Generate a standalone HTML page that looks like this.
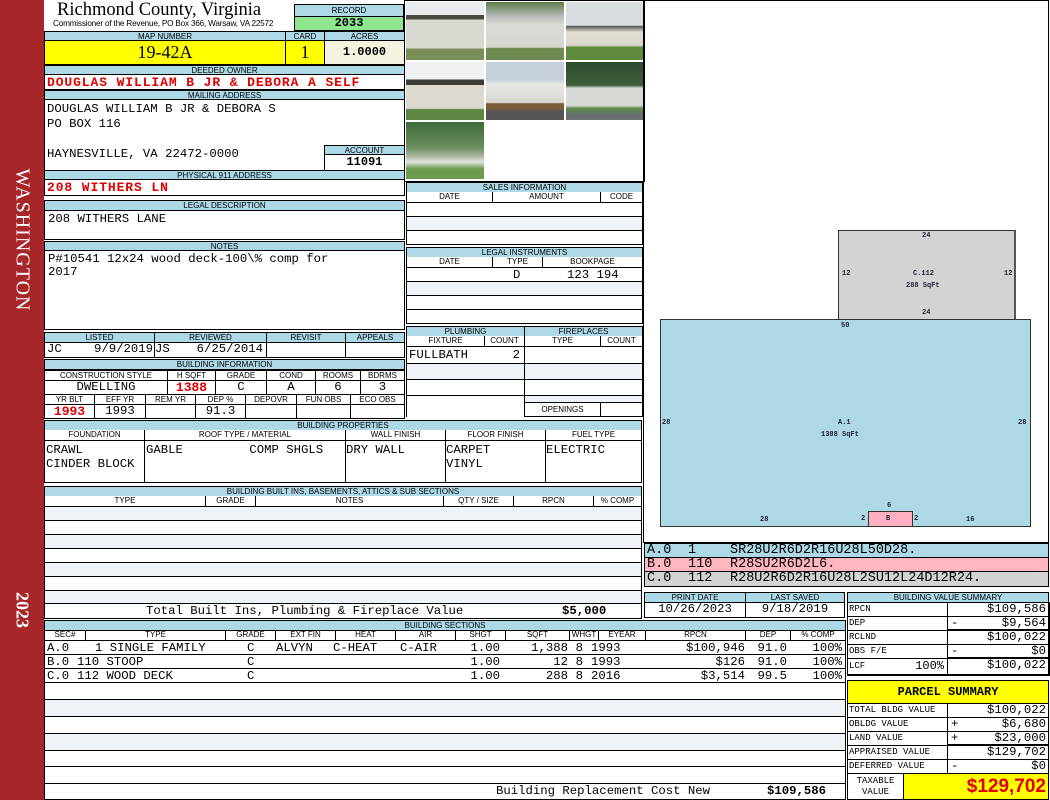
<!DOCTYPE html>
<html><head><meta charset="utf-8"><style>
*{margin:0;padding:0;box-sizing:border-box}
body{width:1050px;height:800px;position:relative;background:#fff;overflow:hidden;font-family:"Liberation Mono",monospace;font-size:12px;color:#000}
div{position:absolute}
span{position:absolute}
.h{background:#add8e6;border:1px solid #000;font:8px/9px "Liberation Sans",sans-serif;text-align:center;white-space:nowrap;overflow:hidden}
.c{border:1px solid #000;white-space:nowrap;overflow:hidden}
.hs{font:8px/9px "Liberation Sans",sans-serif;text-align:center;border:1px solid #000;border-top:none;background:#fff;white-space:nowrap;overflow:hidden}
.m{font-family:"Liberation Mono",monospace;font-size:12.3px;line-height:13px;white-space:pre}
.red{color:#e00000;font-weight:bold;font-size:13px;letter-spacing:0.9px}
.ph{border:1px solid #fff}
.sk{font:7px "Liberation Mono",monospace;color:#223;font-weight:bold}
.st{background:#eef3f8}
.r{text-align:right}
</style></head><body>
<!-- red bar -->
<div style="left:0;top:0;width:44px;height:800px;background:#a6262a"></div>
<div style="left:22px;top:240px;transform:translate(-50%,-50%) rotate(90deg);color:#fff;font:20px 'Liberation Serif',serif;white-space:nowrap;letter-spacing:1px">WASHINGTON</div>
<div style="left:22px;top:610px;transform:translate(-50%,-50%) rotate(90deg);color:#fff;font:bold 18px 'Liberation Serif',serif">2023</div>

<!-- title -->
<div style="left:57px;top:0px;font:18.5px/20px 'Liberation Serif',serif;white-space:nowrap">Richmond County, Virginia</div>
<div style="left:53px;top:19px;font:8.2px 'Liberation Sans',sans-serif;white-space:nowrap;letter-spacing:-0.2px">Commissioner of the Revenue, PO Box 366, Warsaw, VA 22572</div>
<div class="h" style="left:294px;top:4px;width:110px;height:13px;line-height:11px">RECORD</div>
<div class="c" style="left:294px;top:16px;width:110px;height:15px;background:#8fe68f;text-align:center;font:bold 12px/13px 'Liberation Mono',monospace">2033</div>

<div class="h" style="left:44px;top:31px;width:242px;height:10px">MAP NUMBER</div>
<div class="h" style="left:285px;top:31px;width:40px;height:10px">CARD</div>
<div class="h" style="left:324px;top:31px;width:81px;height:10px">ACRES</div>
<div class="c" style="left:44px;top:40px;width:242px;height:25px;background:#ffff00;text-align:center;font:18px/23px 'Liberation Serif',serif">19-42A</div>
<div class="c" style="left:285px;top:40px;width:40px;height:25px;background:#ffff00;text-align:center;font:18px/23px 'Liberation Serif',serif">1</div>
<div class="c" style="left:324px;top:40px;width:81px;height:25px;background:#f5f3e0;text-align:center;font:bold 12px/23px 'Liberation Mono',monospace">1.0000</div>

<div class="h" style="left:44px;top:65px;width:361px;height:10px">DEEDED OWNER</div>
<div class="c m red" style="left:44px;top:74px;width:361px;height:16px;line-height:15px;padding-left:2px">DOUGLAS WILLIAM B JR &amp; DEBORA A SELF</div>
<div class="h" style="left:44px;top:90px;width:361px;height:10px">MAILING ADDRESS</div>
<div class="c" style="left:44px;top:99px;width:361px;height:72px"></div>
<div class="m" style="left:47px;top:102px;line-height:15px">DOUGLAS WILLIAM B JR &amp; DEBORA S
PO BOX 116

HAYNESVILLE, VA 22472-0000</div>
<div class="h" style="left:324px;top:145px;width:81px;height:10px">ACCOUNT</div>
<div class="c" style="left:324px;top:154px;width:81px;height:17px;text-align:center;font:bold 12px/15px 'Liberation Mono',monospace">11091</div>
<div class="h" style="left:44px;top:170px;width:361px;height:10px">PHYSICAL 911 ADDRESS</div>
<div class="c m red" style="left:44px;top:179px;width:361px;height:17px;line-height:15px;padding-left:2px">208 WITHERS LN</div>

<div class="h" style="left:44px;top:200px;width:361px;height:11px">LEGAL DESCRIPTION</div>
<div class="c m" style="left:44px;top:210px;width:361px;height:30px;padding:2px 3px">208 WITHERS LANE</div>
<div class="h" style="left:44px;top:241px;width:361px;height:10px">NOTES</div>
<div class="c m" style="left:44px;top:250px;width:361px;height:80px;padding:2px 3px">P#10541 12x24 wood deck-100\% comp for
2017</div>

<!-- listed -->
<div class="h" style="left:44px;top:332px;width:111px;height:11px">LISTED</div>
<div class="h" style="left:154px;top:332px;width:113px;height:11px">REVIEWED</div>
<div class="h" style="left:266px;top:332px;width:80px;height:11px">REVISIT</div>
<div class="h" style="left:345px;top:332px;width:60px;height:11px">APPEALS</div>
<div class="c m" style="left:44px;top:342px;width:111px;height:16px"><span style="left:2px">JC</span><span style="right:1px">9/9/2019</span></div>
<div class="c m" style="left:154px;top:342px;width:113px;height:16px"><span style="left:0">JS</span><span style="right:3px">6/25/2014</span></div>
<div class="c" style="left:266px;top:342px;width:80px;height:16px"></div>
<div class="c" style="left:345px;top:342px;width:60px;height:16px"></div>

<div class="h" style="left:44px;top:359px;width:361px;height:11px">BUILDING INFORMATION</div>
<div class="hs" style="left:44px;top:370px;width:124px;height:11px;border-top:1px solid #000">CONSTRUCTION STYLE</div>
<div class="hs" style="left:167px;top:370px;width:49px;height:11px;border-top:1px solid #000">H SQFT</div>
<div class="hs" style="left:215px;top:370px;width:52px;height:11px;border-top:1px solid #000">GRADE</div>
<div class="hs" style="left:266px;top:370px;width:50px;height:11px;border-top:1px solid #000">COND</div>
<div class="hs" style="left:315px;top:370px;width:46px;height:11px;border-top:1px solid #000">ROOMS</div>
<div class="hs" style="left:360px;top:370px;width:45px;height:11px;border-top:1px solid #000">BDRMS</div>
<div class="c m" style="left:44px;top:380px;width:124px;height:15px;text-align:center">DWELLING</div>
<div class="c m red" style="left:167px;top:380px;width:49px;height:15px;text-align:center;letter-spacing:0">1388</div>
<div class="c m" style="left:215px;top:380px;width:52px;height:15px;text-align:center">C</div>
<div class="c m" style="left:266px;top:380px;width:50px;height:15px;text-align:center">A</div>
<div class="c m" style="left:315px;top:380px;width:46px;height:15px;text-align:center">6</div>
<div class="c m" style="left:360px;top:380px;width:45px;height:15px;text-align:center">3</div>
<div class="hs" style="left:44px;top:394px;width:51px;height:11px;border-top:1px solid #000">YR BLT</div>
<div class="hs" style="left:94px;top:394px;width:52px;height:11px;border-top:1px solid #000">EFF YR</div>
<div class="hs" style="left:145px;top:394px;width:51px;height:11px;border-top:1px solid #000">REM YR</div>
<div class="hs" style="left:195px;top:394px;width:51px;height:11px;border-top:1px solid #000">DEP %</div>
<div class="hs" style="left:245px;top:394px;width:52px;height:11px;border-top:1px solid #000">DEPOVR</div>
<div class="hs" style="left:296px;top:394px;width:55px;height:11px;border-top:1px solid #000">FUN OBS</div>
<div class="hs" style="left:350px;top:394px;width:55px;height:11px;border-top:1px solid #000">ECO OBS</div>
<div class="c m red" style="left:44px;top:404px;width:51px;height:15px;text-align:center;letter-spacing:0">1993</div>
<div class="c m" style="left:94px;top:404px;width:52px;height:15px;text-align:center">1993</div>
<div class="c" style="left:145px;top:404px;width:51px;height:15px"></div>
<div class="c m" style="left:195px;top:404px;width:51px;height:15px;text-align:center">91.3</div>
<div class="c" style="left:245px;top:404px;width:52px;height:15px"></div>
<div class="c" style="left:296px;top:404px;width:55px;height:15px"></div>
<div class="c" style="left:350px;top:404px;width:55px;height:15px"></div>

<!-- photos -->
<div style="left:404px;top:0;width:241px;height:182px;border:1px solid #000"></div>
<div class="ph" style="left:405px;top:1px;width:80px;height:60px;background:linear-gradient(#e8ecef 0,#e8ecef 22%,#4a4a44 22%,#4a4a44 30%,#d9d8d0 30%,#d9d8d0 80%,#7a8f58 80%)"></div>
<div class="ph" style="left:485px;top:1px;width:80px;height:60px;background:linear-gradient(#5d7a48 0,#b9bcbc 25%,#dcdcd6 40%,#d6d6d0 78%,#6f8b4f 80%)"></div>
<div class="ph" style="left:565px;top:1px;width:79px;height:60px;background:linear-gradient(#d8dde0 0,#d8dde0 40%,#5a5a55 42%,#e2ded4 52%,#d8d4c8 75%,#5f8a3e 78%)"></div>
<div class="ph" style="left:405px;top:61px;width:80px;height:60px;background:linear-gradient(#eef0f2 0,#eef0f2 30%,#3c3c38 30%,#3c3c38 40%,#dcd9d0 40%,#dcd9d0 80%,#5f8640 82%)"></div>
<div class="ph" style="left:485px;top:61px;width:80px;height:60px;background:linear-gradient(#c6d0dc 0,#c6d0dc 30%,#e8e8e6 38%,#d9d6d0 70%,#7a5c3a 72%,#7a5c3a 80%,#555 85%)"></div>
<div class="ph" style="left:565px;top:61px;width:79px;height:60px;background:linear-gradient(#2c4a2e 0,#3d5d3a 40%,#d6d9d4 45%,#d6d9d4 75%,#5c8a48 80%,#6a7070 92%)"></div>
<div class="ph" style="left:405px;top:121px;width:80px;height:59px;background:linear-gradient(#3e6a3a 0,#6a8e5e 45%,#aab7a0 60%,#e0e4e0 70%,#6e9a4e 82%)"></div>

<!-- sales -->
<div class="h" style="left:406px;top:182px;width:237px;height:11px">SALES INFORMATION</div>
<div class="hs" style="left:406px;top:192px;width:87px;height:11px">DATE</div>
<div class="hs" style="left:492px;top:192px;width:109px;height:11px">AMOUNT</div>
<div class="hs" style="left:600px;top:192px;width:43px;height:11px">CODE</div>
<div class="c" style="left:406px;top:202px;width:237px;height:15px"></div>
<div class="c st" style="left:406px;top:216px;width:237px;height:15px"></div>
<div class="c" style="left:406px;top:230px;width:237px;height:15px"></div>
<div class="h" style="left:406px;top:247px;width:237px;height:11px">LEGAL INSTRUMENTS</div>
<div class="hs" style="left:406px;top:257px;width:87px;height:11px">DATE</div>
<div class="hs" style="left:492px;top:257px;width:51px;height:11px">TYPE</div>
<div class="hs" style="left:542px;top:257px;width:101px;height:11px">BOOKPAGE</div>
<div class="c m" style="left:406px;top:267px;width:237px;height:15px"><span style="left:106px;top:1px">D</span><span style="left:160px;top:1px">123 194</span></div>
<div class="c st" style="left:406px;top:281px;width:237px;height:15px"></div>
<div class="c" style="left:406px;top:295px;width:237px;height:15px"></div>
<div class="c" style="left:406px;top:309px;width:237px;height:15px"></div>

<!-- plumbing -->
<div class="h" style="left:406px;top:326px;width:119px;height:11px">PLUMBING</div>
<div class="h" style="left:524px;top:326px;width:119px;height:11px">FIREPLACES</div>
<div class="hs" style="left:406px;top:336px;width:79px;height:11px">FIXTURE</div>
<div class="hs" style="left:484px;top:336px;width:41px;height:11px">COUNT</div>
<div class="hs" style="left:524px;top:336px;width:77px;height:11px">TYPE</div>
<div class="hs" style="left:600px;top:336px;width:43px;height:11px">COUNT</div>
<div class="c m" style="left:406px;top:346px;width:119px;height:18px"><span style="left:2px;top:2px">FULLBATH</span><span style="right:4px;top:2px">2</span></div>
<div class="c st" style="left:406px;top:363px;width:119px;height:17px"></div>
<div class="c" style="left:406px;top:379px;width:119px;height:17px"></div>
<div class="c st" style="left:406px;top:395px;width:119px;height:22px;border-bottom:none;background:#fff"></div>
<div class="c" style="left:524px;top:346px;width:119px;height:18px"></div>
<div class="c st" style="left:524px;top:363px;width:119px;height:17px"></div>
<div class="c" style="left:524px;top:379px;width:119px;height:17px"></div>
<div class="c st" style="left:524px;top:395px;width:119px;height:8px"></div>
<div class="c" style="left:524px;top:402px;width:77px;height:15px;font:8px/13px 'Liberation Sans',sans-serif;text-align:center">OPENINGS</div>
<div class="c" style="left:600px;top:402px;width:43px;height:15px"></div>

<!-- building properties -->
<div class="h" style="left:44px;top:420px;width:598px;height:11px">BUILDING PROPERTIES</div>
<div class="hs" style="left:44px;top:430px;width:101px;height:11px">FOUNDATION</div>
<div class="hs" style="left:144px;top:430px;width:202px;height:11px">ROOF TYPE / MATERIAL</div>
<div class="hs" style="left:345px;top:430px;width:101px;height:11px">WALL FINISH</div>
<div class="hs" style="left:445px;top:430px;width:101px;height:11px">FLOOR FINISH</div>
<div class="hs" style="left:545px;top:430px;width:97px;height:11px">FUEL TYPE</div>
<div class="c m" style="left:44px;top:440px;width:101px;height:43px;padding:2px 1px;line-height:14px">CRAWL
CINDER BLOCK</div>
<div class="c m" style="left:144px;top:440px;width:202px;height:43px;padding:2px 1px;line-height:14px">GABLE         COMP SHGLS</div>
<div class="c m" style="left:345px;top:440px;width:101px;height:43px;padding:2px 0;line-height:14px">DRY WALL</div>
<div class="c m" style="left:445px;top:440px;width:101px;height:43px;padding:2px 0;line-height:14px">CARPET
VINYL</div>
<div class="c m" style="left:545px;top:440px;width:97px;height:43px;padding:2px 0;line-height:14px">ELECTRIC</div>

<!-- built ins -->
<div class="h" style="left:44px;top:486px;width:598px;height:11px">BUILDING BUILT INS, BASEMENTS, ATTICS &amp; SUB SECTIONS</div>
<div class="hs" style="left:44px;top:496px;width:162px;height:11px">TYPE</div>
<div class="hs" style="left:205px;top:496px;width:51px;height:11px">GRADE</div>
<div class="hs" style="left:255px;top:496px;width:189px;height:11px">NOTES</div>
<div class="hs" style="left:443px;top:496px;width:71px;height:11px">QTY / SIZE</div>
<div class="hs" style="left:513px;top:496px;width:81px;height:11px">RPCN</div>
<div class="hs" style="left:593px;top:496px;width:49px;height:11px">% COMP</div>
<div class="c st" style="left:44px;top:506px;width:598px;height:15px"></div>
<div class="c" style="left:44px;top:520px;width:598px;height:15px"></div>
<div class="c st" style="left:44px;top:534px;width:598px;height:15px"></div>
<div class="c" style="left:44px;top:548px;width:598px;height:15px"></div>
<div class="c st" style="left:44px;top:562px;width:598px;height:15px"></div>
<div class="c" style="left:44px;top:576px;width:598px;height:15px"></div>
<div class="c st" style="left:44px;top:590px;width:598px;height:14px"></div>
<div class="c m" style="left:44px;top:603px;width:598px;height:16px;line-height:15px"><span style="left:101px">Total Built Ins, Plumbing &amp; Fireplace Value</span><span style="left:517px;font-weight:bold">$5,000</span></div>

<!-- building sections -->
<div class="h" style="left:44px;top:620px;width:802px;height:11px">BUILDING SECTIONS</div>
<div style="left:44px;top:630px;width:802px;height:11px;border:1px solid #000;border-top:none;font:8px/10px 'Liberation Sans',sans-serif">
<span style="left:0;width:41px;text-align:center;border-right:1px solid #000">SEC#</span>
<span style="left:41px;width:140px;text-align:center;border-right:1px solid #000">TYPE</span>
<span style="left:181px;width:50px;text-align:center;border-right:1px solid #000">GRADE</span>
<span style="left:231px;width:60px;text-align:center;border-right:1px solid #000">EXT FIN</span>
<span style="left:291px;width:60px;text-align:center;border-right:1px solid #000">HEAT</span>
<span style="left:351px;width:60px;text-align:center;border-right:1px solid #000">AIR</span>
<span style="left:411px;width:50px;text-align:center;border-right:1px solid #000">SHGT</span>
<span style="left:461px;width:64px;text-align:center;border-right:1px solid #000">SQFT</span>
<span style="left:525px;width:29px;text-align:center;border-right:1px solid #000">WHGT</span>
<span style="left:554px;width:47px;text-align:center;border-right:1px solid #000">EYEAR</span>
<span style="left:601px;width:100px;text-align:center;border-right:1px solid #000">RPCN</span>
<span style="left:701px;width:45px;text-align:center;border-right:1px solid #000">DEP</span>
<span style="left:746px;width:54px;text-align:center">% COMP</span>
</div>
<div class="c m" style="left:44px;top:640px;width:802px;height:15px;line-height:14px"><span style="left:2px">A.0</span><span style="left:50px">1 SINGLE FAMILY</span><span style="left:202px">C</span><span style="left:231px">ALVYN</span><span style="left:288px">C-HEAT</span><span style="left:355px">C-AIR</span><span style="right:345px">1.00</span><span style="right:277px">1,388</span><span style="right:262px">8</span><span style="left:546px">1993</span><span style="right:100px">$100,946</span><span style="right:58px">91.0</span><span style="right:3px">100%</span></div>
<div class="c m" style="left:44px;top:654px;width:802px;height:15px;line-height:14px"><span style="left:2px">B.0</span><span style="left:32px">110 STOOP</span><span style="left:202px">C</span><span style="right:345px">1.00</span><span style="right:277px">12</span><span style="right:262px">8</span><span style="left:546px">1993</span><span style="right:100px">$126</span><span style="right:58px">91.0</span><span style="right:3px">100%</span></div>
<div class="c m" style="left:44px;top:668px;width:802px;height:15px;line-height:14px"><span style="left:2px">C.0</span><span style="left:32px">112 WOOD DECK</span><span style="left:202px">C</span><span style="right:345px">1.00</span><span style="right:277px">288</span><span style="right:262px">8</span><span style="left:546px">2016</span><span style="right:100px">$3,514</span><span style="right:58px">99.5</span><span style="right:3px">100%</span></div>
<div class="c" style="left:44px;top:682px;width:802px;height:18px"></div>
<div class="c st" style="left:44px;top:699px;width:802px;height:18px"></div>
<div class="c" style="left:44px;top:716px;width:802px;height:18px"></div>
<div class="c st" style="left:44px;top:733px;width:802px;height:18px"></div>
<div class="c" style="left:44px;top:750px;width:802px;height:17px"></div>
<div class="c" style="left:44px;top:766px;width:802px;height:18px"></div>
<div class="c m" style="left:44px;top:783px;width:802px;height:17px;line-height:15px"><span style="left:451px">Building Replacement Cost New</span><span style="left:722px;font-weight:bold">$109,586</span></div>

<!-- sketch -->
<div style="left:643px;top:0;width:406px;height:543px;border:1px solid #000"></div>
<div style="left:838px;top:230px;width:178px;height:90px;background:#d3d3d3;border:1px solid #333;border-right:2px solid #555"></div>
<div style="left:660px;top:319px;width:371px;height:208px;background:#add8e6;border:1px solid #333"></div>
<div style="left:868px;top:511px;width:45px;height:16px;background:#ffb0c0;border:1px solid #333"></div>
<div class="sk" style="left:922px;top:232px">24</div>
<div class="sk" style="left:842px;top:270px">12</div>
<div class="sk" style="left:1004px;top:270px">12</div>
<div class="sk" style="left:913px;top:270px">C.112</div>
<div class="sk" style="left:906px;top:282px">288 SqFt</div>
<div class="sk" style="left:922px;top:309px">24</div>
<div class="sk" style="left:841px;top:322px">50</div>
<div class="sk" style="left:662px;top:419px">28</div>
<div class="sk" style="left:1018px;top:419px">28</div>
<div class="sk" style="left:838px;top:419px">A.1</div>
<div class="sk" style="left:821px;top:431px">1388 SqFt</div>
<div class="sk" style="left:887px;top:502px">6</div>
<div class="sk" style="left:760px;top:516px">28</div>
<div class="sk" style="left:861px;top:515px">2</div>
<div class="sk" style="left:914px;top:515px">2</div>
<div class="sk" style="left:966px;top:516px">16</div>
<div class="sk" style="left:886px;top:515px">B</div>

<div class="m" style="left:644px;top:543px;width:405px;height:15px;background:#add8e6;border:1px solid #000;line-height:13px;font-size:13.5px"><span style="left:2px">A.0</span><span style="left:43px">1</span><span style="left:85px">SR28U2R6D2R16U28L50D28.</span></div>
<div class="m" style="left:644px;top:557px;width:405px;height:15px;background:#ffb6c1;border:1px solid #000;line-height:13px;font-size:13.5px"><span style="left:2px">B.0</span><span style="left:43px">110</span><span style="left:85px">R28SU2R6D2L6.</span></div>
<div class="m" style="left:644px;top:571px;width:405px;height:16px;background:#d3d3d3;border:1px solid #000;line-height:13px;font-size:13.5px"><span style="left:2px">C.0</span><span style="left:43px">112</span><span style="left:85px">R28U2R6D2R16U28L2SU12L24D12R24.</span></div>

<!-- print date -->
<div class="h" style="left:644px;top:592px;width:102px;height:11px">PRINT DATE</div>
<div class="h" style="left:745px;top:592px;width:100px;height:11px">LAST SAVED</div>
<div class="c m" style="left:644px;top:602px;width:102px;height:16px;text-align:center">10/26/2023</div>
<div class="c m" style="left:745px;top:602px;width:100px;height:16px;text-align:center">9/18/2019</div>

<!-- building value summary -->
<div class="h" style="left:847px;top:592px;width:202px;height:11px">BUILDING VALUE SUMMARY</div>
<div class="c" style="left:847px;top:602px;width:203px;height:74px"></div>
<div class="c m" style="left:847px;top:602px;width:101px;height:15px;font-size:9px;line-height:13px;padding-left:1px">RPCN</div>
<div class="c m r" style="left:947px;top:602px;width:102px;height:15px;padding-right:2px">$109,586</div>
<div class="c m" style="left:847px;top:616px;width:101px;height:15px;font-size:9px;line-height:13px;padding-left:1px">DEP</div>
<div class="c m" style="left:947px;top:616px;width:102px;height:15px;border-bottom:2px solid #000"><span style="left:3px">-</span><span style="right:2px">$9,564</span></div>
<div class="c m" style="left:847px;top:630px;width:101px;height:15px;font-size:9px;line-height:13px;padding-left:1px">RCLND</div>
<div class="c m r" style="left:947px;top:630px;width:102px;height:15px;padding-right:2px">$100,022</div>
<div class="c m" style="left:847px;top:644px;width:101px;height:15px;font-size:9px;line-height:13px;padding-left:1px">OBS F/E</div>
<div class="c m" style="left:947px;top:644px;width:102px;height:15px;border-bottom:2px solid #000"><span style="left:3px">-</span><span style="right:2px">$0</span></div>
<div class="c m" style="left:847px;top:658px;width:101px;height:17px;font-size:9px;line-height:14px;padding-left:1px">LCF<span style="right:3px;font-size:12px">100%</span></div>
<div class="c m r" style="left:947px;top:658px;width:102px;height:17px;padding-right:2px">$100,022</div>

<!-- parcel summary -->
<div class="c" style="left:847px;top:680px;width:202px;height:24px;background:#ffff00;text-align:center;font:bold 12px/22px 'Liberation Mono',monospace">PARCEL SUMMARY</div>
<div class="c m" style="left:847px;top:703px;width:101px;height:15px;font-size:9px;line-height:13px;padding-left:1px">TOTAL BLDG VALUE</div>
<div class="c m r" style="left:947px;top:703px;width:102px;height:15px;padding-right:2px">$100,022</div>
<div class="c m" style="left:847px;top:717px;width:101px;height:15px;font-size:9px;line-height:13px;padding-left:1px">OBLDG VALUE</div>
<div class="c m" style="left:947px;top:717px;width:102px;height:15px"><span style="left:3px">+</span><span style="right:2px">$6,680</span></div>
<div class="c m" style="left:847px;top:731px;width:101px;height:15px;font-size:9px;line-height:13px;padding-left:1px">LAND VALUE</div>
<div class="c m" style="left:947px;top:731px;width:102px;height:15px;border-bottom:2px solid #000"><span style="left:3px">+</span><span style="right:2px">$23,000</span></div>
<div class="c m" style="left:847px;top:745px;width:101px;height:15px;font-size:9px;line-height:13px;padding-left:1px">APPRAISED VALUE</div>
<div class="c m r" style="left:947px;top:745px;width:102px;height:15px;padding-right:2px">$129,702</div>
<div class="c m" style="left:847px;top:759px;width:101px;height:15px;font-size:9px;line-height:13px;padding-left:1px">DEFERRED VALUE</div>
<div class="c m" style="left:947px;top:759px;width:102px;height:15px"><span style="left:3px">-</span><span style="right:2px">$0</span></div>
<div class="c m" style="left:847px;top:773px;width:57px;height:27px;font-size:9px;line-height:11px;text-align:center;padding-top:2px">TAXABLE
VALUE</div>
<div class="c" style="left:903px;top:773px;width:146px;height:27px;background:#ffff00;text-align:right;padding-right:2px;color:#e00000;font:bold 19px/25px 'Liberation Sans',sans-serif">$129,702</div>
</body></html>
